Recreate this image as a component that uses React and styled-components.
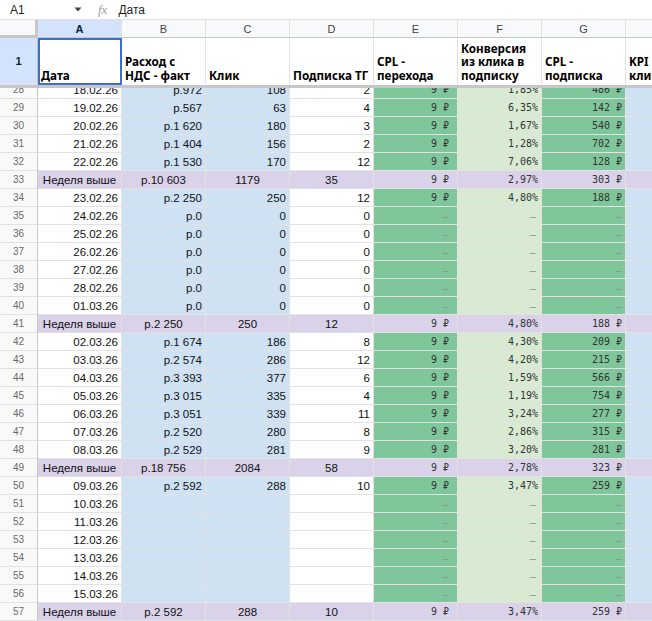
import React from "react";
import styled, { createGlobalStyle } from "styled-components";

const GlobalStyle = createGlobalStyle`
  html, body {
    margin: 0;
    padding: 0;
    background: #fff;
    overflow: hidden;
  }
  body {
    font-family: "Liberation Sans", Arial, sans-serif;
  }
`;

const TEMPLATE = "38px repeat(8, 84px)";

const BLUE = "#cfe2f3";
const GREEN = "#7fc79b";
const LIGHT_GREEN = "#d9ead3";
const PURPLE = "#d9d2e9";
const GRID = "#e2e2e2";

const Sheet = styled.div`
  width: 652px;
  height: 621px;
  overflow: hidden;
  display: flex;
  flex-direction: column;
  background: #fff;
`;

const FormulaBar = styled.div`
  height: 20px;
  box-sizing: border-box;
  border-bottom: 1px solid #e1e3e1;
  display: flex;
  align-items: center;
  font-size: 12px;
  color: #1f1f1f;
  flex-shrink: 0;
`;

const NameBox = styled.div`
  width: 92px;
  box-sizing: border-box;
  padding: 0 10px 0 10px;
  display: flex;
  align-items: center;
  justify-content: space-between;
`;

const Fx = styled.span`
  font-family: "Liberation Serif", serif;
  font-style: italic;
  color: #a0a0a0;
  font-size: 13px;
  margin-left: 6px;
  margin-right: 11px;
`;

const Row = styled.div`
  display: grid;
  grid-template-columns: ${TEMPLATE};
  height: ${(p) => p.$h}px;
  flex-shrink: 0;
`;

const ColHead = styled.div`
  box-sizing: border-box;
  border-right: 1px solid ${(p) => (p.$corner ? "#c7c7c7" : "#e1e1e1")};
  border-right-width: ${(p) => (p.$corner ? 3 : 1)}px;
  border-bottom: 1px solid #c4c7c5;
  border-bottom-width: ${(p) => (p.$corner ? 3 : 1)}px;
  background: ${(p) => (p.$sel ? "#d3e3fd" : "#f8f9fa")};
  color: ${(p) => (p.$sel ? "#0b1f3d" : "#444")};
  font-weight: ${(p) => (p.$sel ? 700 : 400)};
  font-size: 11px;
  display: flex;
  align-items: center;
  justify-content: center;
`;

const RowNum = styled.div`
  box-sizing: border-box;
  border-right: 1px solid #c4c7c5;
  border-bottom: 1px solid ${GRID};
  background: ${(p) => (p.$sel ? "#d3e3fd" : "#f9f9f9")};
  color: ${(p) => (p.$sel ? "#0b1f3d" : "#6a6a6a")};
  font-weight: ${(p) => (p.$sel ? 700 : 400)};
  font-size: ${(p) => (p.$sel ? 11 : 10)}px;
  display: flex;
  align-items: center;
  justify-content: center;
`;

const HeadCell = styled.div`
  box-sizing: border-box;
  border-right: 1px solid ${GRID};
  font-family: "Noto Sans", "DejaVu Sans", sans-serif;
  font-weight: 700;
  font-size: 11.7px;
  line-height: 13.5px;
  color: #000;
  padding: 0 2px 3px 3px;
  display: flex;
  align-items: flex-end;
  white-space: pre;
  overflow: hidden;
  outline: ${(p) => (p.$active ? "2px solid #3d6ec9" : "none")};
  outline-offset: -2px;
`;

const Freeze = styled.div`
  height: 3px;
  background: #c7c7c7;
  flex-shrink: 0;
`;

const Body = styled.div`
  flex: 1;
  overflow: hidden;
`;

const Scroller = styled.div`
  margin-top: -7px;
`;

const Cell = styled.div`
  box-sizing: border-box;
  border-right: 1px solid ${GRID};
  border-bottom: 1px solid ${GRID};
  background: ${(p) => p.$bg};
  display: flex;
  align-items: center;
  justify-content: ${(p) =>
    p.$align === "center" ? "center" : p.$align === "left" ? "flex-start" : "flex-end"};
  padding: 0 ${(p) => p.$pr}px 0 3px;
  font-family: ${(p) =>
    p.$mono ? '"DejaVu Sans Mono", "Liberation Mono", monospace' : '"Liberation Sans", Arial, sans-serif'};
  font-size: ${(p) => (p.$mono ? 10 : 11.5)}px;
  color: ${(p) => (p.$muted ? "#8f8f8f" : p.$mono ? "#333" : "#111")};
  white-space: nowrap;
  overflow: hidden;
`;

const data = [
  ["28", "day", "18.02.26", "р.972", "108", "2", "9 ₽", "1,85%", "486 ₽"],
  ["29", "day", "19.02.26", "р.567", "63", "4", "9 ₽", "6,35%", "142 ₽"],
  ["30", "day", "20.02.26", "р.1 620", "180", "3", "9 ₽", "1,67%", "540 ₽"],
  ["31", "day", "21.02.26", "р.1 404", "156", "2", "9 ₽", "1,28%", "702 ₽"],
  ["32", "day", "22.02.26", "р.1 530", "170", "12", "9 ₽", "7,06%", "128 ₽"],
  ["33", "week", "Неделя выше", "р.10 603", "1179", "35", "9 ₽", "2,97%", "303 ₽"],
  ["34", "day", "23.02.26", "р.2 250", "250", "12", "9 ₽", "4,80%", "188 ₽"],
  ["35", "day", "24.02.26", "р.0", "0", "0", "-", "-", "-"],
  ["36", "day", "25.02.26", "р.0", "0", "0", "-", "-", "-"],
  ["37", "day", "26.02.26", "р.0", "0", "0", "-", "-", "-"],
  ["38", "day", "27.02.26", "р.0", "0", "0", "-", "-", "-"],
  ["39", "day", "28.02.26", "р.0", "0", "0", "-", "-", "-"],
  ["40", "day", "01.03.26", "р.0", "0", "0", "-", "-", "-"],
  ["41", "week", "Неделя выше", "р.2 250", "250", "12", "9 ₽", "4,80%", "188 ₽"],
  ["42", "day", "02.03.26", "р.1 674", "186", "8", "9 ₽", "4,30%", "209 ₽"],
  ["43", "day", "03.03.26", "р.2 574", "286", "12", "9 ₽", "4,20%", "215 ₽"],
  ["44", "day", "04.03.26", "р.3 393", "377", "6", "9 ₽", "1,59%", "566 ₽"],
  ["45", "day", "05.03.26", "р.3 015", "335", "4", "9 ₽", "1,19%", "754 ₽"],
  ["46", "day", "06.03.26", "р.3 051", "339", "11", "9 ₽", "3,24%", "277 ₽"],
  ["47", "day", "07.03.26", "р.2 520", "280", "8", "9 ₽", "2,86%", "315 ₽"],
  ["48", "day", "08.03.26", "р.2 529", "281", "9", "9 ₽", "3,20%", "281 ₽"],
  ["49", "week", "Неделя выше", "р.18 756", "2084", "58", "9 ₽", "2,78%", "323 ₽"],
  ["50", "day", "09.03.26", "р.2 592", "288", "10", "9 ₽", "3,47%", "259 ₽"],
  ["51", "day", "10.03.26", "", "", "", "-", "-", "-"],
  ["52", "day", "11.03.26", "", "", "", "-", "-", "-"],
  ["53", "day", "12.03.26", "", "", "", "-", "-", "-"],
  ["54", "day", "13.03.26", "", "", "", "-", "-", "-"],
  ["55", "day", "14.03.26", "", "", "", "-", "-", "-"],
  ["56", "day", "15.03.26", "", "", "", "-", "-", "-"],
  ["57", "week", "Неделя выше", "р.2 592", "288", "10", "9 ₽", "3,47%", "259 ₽"],
];

const dayBg = ["#fff", BLUE, BLUE, "#fff", GREEN, LIGHT_GREEN, GREEN, BLUE];
const monoPad = { 4: 8, 5: 3, 6: 3 };
const dashPad = { 4: 8, 5: 5, 6: 3 };

const headers = [
  "Дата",
  "Расход с\nНДС - факт",
  "Клик",
  "Подписка ТГ",
  "CPL -\nперехода",
  "Конверсия\nиз клика в\nподписку",
  "CPL -\nподписка",
  "KPI\nклика",
];

function Caret() {
  return (
    <svg width="8" height="5" viewBox="0 0 8 5">
      <path d="M0.5 0.5 L7.5 0.5 L4 4.5 Z" fill="#444" />
    </svg>
  );
}

function DataRow({ row }) {
  const [num, kind, ...vals] = row;
  const week = kind === "week";
  const cells = [...vals, ""];
  return (
    <Row $h={18}>
      <RowNum>{num}</RowNum>
      {cells.map((v, i) => {
        const mono = i >= 4 && i <= 6;
        const dash = v === "-";
        let align = "right";
        if (week && i <= 3) align = "center";
        const pr = mono ? (dash ? dashPad[i] : monoPad[i]) : 3;
        return (
          <Cell
            key={i}
            $bg={week ? PURPLE : dayBg[i]}
            $align={align}
            $mono={mono && !dash}
            $muted={dash}
            $pr={pr}
          >
            {dash ? "–" : v}
          </Cell>
        );
      })}
    </Row>
  );
}

export default function App() {
  return (
    <Sheet>
      <GlobalStyle />
      <FormulaBar>
        <NameBox>
          <span>A1</span>
          <Caret />
        </NameBox>
        <Fx>fx</Fx>
        <span>Дата</span>
      </FormulaBar>
      <Row $h={18}>
        <ColHead $corner />
        {["A", "B", "C", "D", "E", "F", "G", "H"].map((c) => (
          <ColHead key={c} $sel={c === "A"}>
            {c}
          </ColHead>
        ))}
      </Row>
      <Row $h={47}>
        <RowNum $sel>1</RowNum>
        {headers.map((h, i) => (
          <HeadCell key={i} $active={i === 0}>
            {h}
          </HeadCell>
        ))}
      </Row>
      <Freeze />
      <Body>
        <Scroller>
          {data.map((r) => (
            <DataRow key={r[0]} row={r} />
          ))}
        </Scroller>
      </Body>
    </Sheet>
  );
}
